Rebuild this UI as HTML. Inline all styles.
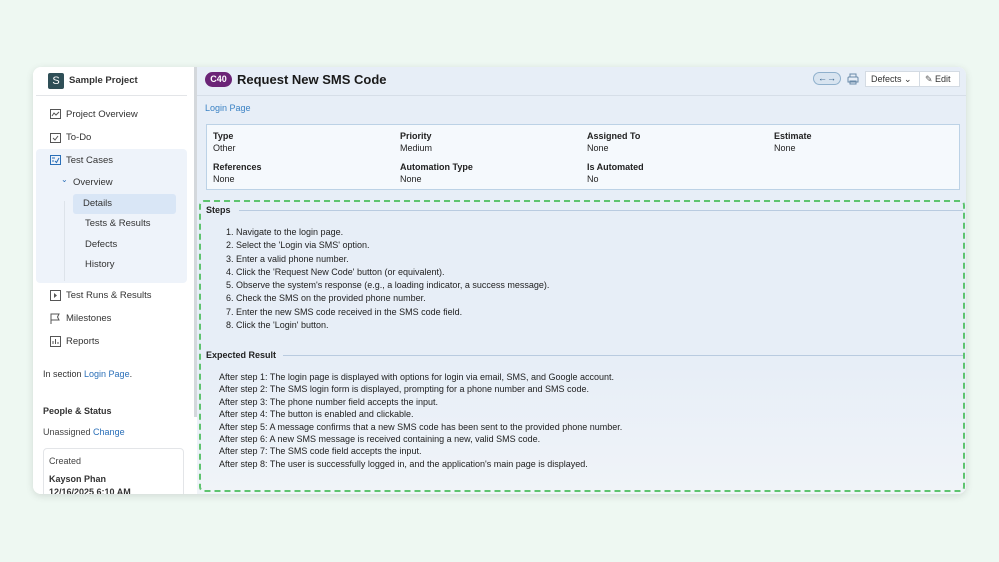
<!DOCTYPE html>
<html><head><meta charset="utf-8"><style>
*{margin:0;padding:0;box-sizing:border-box}
body{width:999px;height:562px;background:#eef8f2;font-family:"Liberation Sans",Arial,sans-serif;position:relative;overflow:hidden;color:#222}
.card{position:absolute;left:33px;top:67px;width:933px;height:427px;border-radius:8px;overflow:hidden;box-shadow:0 2px 8px rgba(0,0,0,.12);background:#fff}
.side{position:absolute;left:0;top:0;width:161px;height:427px;background:#fff}
.sb{position:absolute;left:161px;top:0;width:3px;height:350px;background:#d4d8dc}
.main{position:absolute;left:164px;top:0;right:0;height:427px;background:linear-gradient(#e7eef7 0,#e7eef7 70%,#f0f4f8 100%)}
.a{position:absolute;white-space:nowrap}
.t9{font-size:9px}
.lnk{color:#2a6fb8}
.nav{font-size:9.5px;color:#333}
svg{position:absolute}
</style></head><body>
<div class="card">
<div class="side">
  <div class="a" style="left:15px;top:6px;width:16px;height:16px;background:#2f4f57;border-radius:2px;color:#fff;font-size:11px;text-align:center;line-height:16px">S</div>
  <div class="a" style="left:36px;top:8px;font-size:9.5px;font-weight:bold;color:#333">Sample Project</div>
  <div class="a" style="left:3px;top:28px;width:151px;height:1px;background:#e3e5e8"></div>
  <svg style="left:17px;top:42px" width="11" height="10"><rect x=".5" y=".5" width="10" height="9" fill="none" stroke="#555"/><path d="M2 7l2-3 2 2 3-3" fill="none" stroke="#555"/></svg>
  <div class="a nav" style="left:33px;top:42px">Project Overview</div>
  <svg style="left:17px;top:65px" width="11" height="11"><rect x=".5" y="1.5" width="10" height="9" fill="none" stroke="#555"/><path d="M3 6l2 2 3-4" fill="none" stroke="#555"/></svg>
  <div class="a nav" style="left:33px;top:65px">To-Do</div>
  <div class="a" style="left:3px;top:82px;width:151px;height:134px;background:#eef3fa;border-radius:4px"></div>
  <svg style="left:17px;top:88px" width="11" height="10"><rect x=".5" y=".5" width="10" height="9" fill="none" stroke="#2a6fb8"/><path d="M2 3h3M2 6h2M5 6l1.5 1.5L9 3" fill="none" stroke="#2a6fb8"/></svg>
  <div class="a nav lnk" style="left:33px;top:88px">Test Cases</div>
  <div class="a lnk" style="left:28px;top:108px;font-size:8px">⌄</div>
  <div class="a nav lnk" style="left:40px;top:110px">Overview</div>
  <div class="a" style="left:31px;top:134px;width:1px;height:80px;background:#dde3ea"></div>
  <div class="a" style="left:40px;top:127px;width:103px;height:20px;background:#d9e6f6;border-radius:3px"></div>
  <div class="a nav lnk" style="left:50px;top:131px">Details</div>
  <div class="a nav" style="left:52px;top:151px">Tests &amp; Results</div>
  <div class="a nav" style="left:52px;top:172px">Defects</div>
  <div class="a nav" style="left:52px;top:192px">History</div>
  <svg style="left:17px;top:223px" width="11" height="11"><rect x=".5" y=".5" width="10" height="10" fill="none" stroke="#555"/><path d="M4 3l3 2.5L4 8z" fill="#555"/></svg>
  <div class="a nav" style="left:33px;top:223px">Test Runs &amp; Results</div>
  <svg style="left:17px;top:246px" width="11" height="11"><path d="M1 11V1h8l-1.5 3L9 7H1" fill="none" stroke="#555"/></svg>
  <div class="a nav" style="left:33px;top:246px">Milestones</div>
  <svg style="left:17px;top:269px" width="11" height="11"><rect x=".5" y=".5" width="10" height="10" fill="none" stroke="#555"/><path d="M3 8V5M5.5 8V3M8 8V6" stroke="#555"/></svg>
  <div class="a nav" style="left:33px;top:269px">Reports</div>
  <div class="a t9" style="left:10px;top:302px;color:#333">In section <span class="lnk">Login Page</span>.</div>
  <div class="a t9" style="left:10px;top:339px;font-weight:bold;color:#333">People &amp; Status</div>
  <div class="a t9" style="left:10px;top:360px;color:#444">Unassigned <span class="lnk">Change</span></div>
  <div class="a" style="left:10px;top:381px;width:141px;height:60px;border:1px solid #e3e5e8;border-radius:4px"></div>
  <div class="a t9" style="left:16px;top:389px;color:#444">Created</div>
  <div class="a t9" style="left:16px;top:407px;font-weight:bold;color:#333">Kayson Phan</div>
  <div class="a t9" style="left:16px;top:420px;font-weight:bold;color:#333">12/16/2025 6:10 AM</div>
</div>
<div class="sb"></div>
<div class="main">
  <div class="a" style="left:8px;top:5px;width:27px;height:15px;background:#6b2477;border-radius:8px;color:#fff;font-size:9px;font-weight:bold;text-align:center;line-height:15px">C40</div>
  <div class="a" style="left:40px;top:5px;font-size:13px;font-weight:bold;color:#1a1a1a">Request New SMS Code</div>
  <div class="a" style="left:0;top:28px;width:100%;height:1px;background:#d6dee8"></div>
  <div class="a" style="left:616px;top:5px;width:28px;height:13px;border:1px solid #8fb0cc;background:#d8e4f0;border-radius:7px;font-size:9px;line-height:11px;text-align:center;color:#2a5a86">←→</div>
  <svg style="left:650px;top:6px" width="12" height="12"><path d="M3 4V1h6v3M2 4h8a1 1 0 011 1v4H1V5a1 1 0 011-1zM3 8h6v3H3z" fill="none" stroke="#6a8aa8"/></svg>
  <div class="a" style="left:668px;top:4px;width:95px;height:16px;background:#fff;border:1px solid #d4dbe3"></div>
  <div class="a" style="left:722px;top:4px;width:1px;height:16px;background:#d4dbe3"></div>
  <div class="a t9" style="left:674px;top:7px;color:#333">Defects ⌄</div>
  <div class="a t9" style="left:728px;top:7px;color:#333"><span style="color:#555">✎</span> Edit</div>
  <div class="a t9" style="left:8px;top:36px;color:#3b82c4">Login Page</div>
  <div class="a" style="left:9px;top:57px;width:754px;height:66px;background:#f5f9fd;border:1px solid #bcd2e6"></div>
  <div class="a t9" style="left:16px;top:64px;font-weight:bold">Type</div><div class="a t9" style="left:16px;top:76px">Other</div>
  <div class="a t9" style="left:203px;top:64px;font-weight:bold">Priority</div><div class="a t9" style="left:203px;top:76px">Medium</div>
  <div class="a t9" style="left:390px;top:64px;font-weight:bold">Assigned To</div><div class="a t9" style="left:390px;top:76px">None</div>
  <div class="a t9" style="left:577px;top:64px;font-weight:bold">Estimate</div><div class="a t9" style="left:577px;top:76px">None</div>
  <div class="a t9" style="left:16px;top:95px;font-weight:bold">References</div><div class="a t9" style="left:16px;top:107px">None</div>
  <div class="a t9" style="left:203px;top:95px;font-weight:bold">Automation Type</div><div class="a t9" style="left:203px;top:107px">None</div>
  <div class="a t9" style="left:390px;top:95px;font-weight:bold">Is Automated</div><div class="a t9" style="left:390px;top:107px">No</div>
  <div class="a" style="left:2px;top:133px;width:766px;height:292px;border:2px dashed #5ec46f;border-radius:5px"></div>
  <div class="a t9" style="left:9px;top:138px;font-weight:bold">Steps</div>
  <div class="a" style="left:42px;top:143px;width:724px;height:1px;background:#b9cbe0"></div>
  <div class="a t9" style="left:29px;top:159px;line-height:13.3px">1. Navigate to the login page.<br>2. Select the 'Login via SMS' option.<br>3. Enter a valid phone number.<br>4. Click the 'Request New Code' button (or equivalent).<br>5. Observe the system's response (e.g., a loading indicator, a success message).<br>6. Check the SMS on the provided phone number.<br>7. Enter the new SMS code received in the SMS code field.<br>8. Click the 'Login' button.</div>
  <div class="a t9" style="left:9px;top:283px;font-weight:bold">Expected Result</div>
  <div class="a" style="left:86px;top:288px;width:680px;height:1px;background:#b9cbe0"></div>
  <div class="a t9" style="left:22px;top:304px;line-height:12.4px">After step 1: The login page is displayed with options for login via email, SMS, and Google account.<br>After step 2: The SMS login form is displayed, prompting for a phone number and SMS code.<br>After step 3: The phone number field accepts the input.<br>After step 4: The button is enabled and clickable.<br>After step 5: A message confirms that a new SMS code has been sent to the provided phone number.<br>After step 6: A new SMS message is received containing a new, valid SMS code.<br>After step 7: The SMS code field accepts the input.<br>After step 8: The user is successfully logged in, and the application's main page is displayed.</div>
</div>
</div>
</body></html>
